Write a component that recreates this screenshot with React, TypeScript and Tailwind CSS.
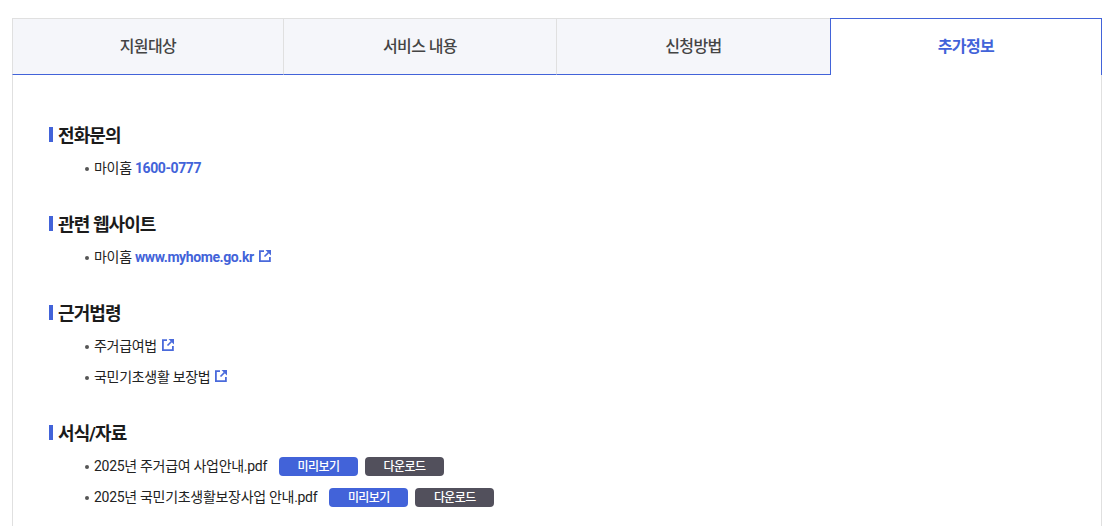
import React from 'react';

const font = { fontFamily: 'Roboto, "Noto Sans CJK KR", sans-serif' };

function LinkIcon() {
  return (
    <svg width="12" height="12" viewBox="0 0 12 12" fill="none" className="shrink-0 text-[#4a6adb]">
      <path d="M5 1.1H0.9V11.1H10.9V7" stroke="currentColor" strokeWidth="1.8" />
      <path d="M6.5 0H12V5.5Z" fill="currentColor" />
      <path d="M9.5 2.5L5.5 6.5" stroke="currentColor" strokeWidth="1.7" />
    </svg>
  );
}

function Title({ children }: { children: React.ReactNode }) {
  return (
    <h3 className="flex items-center gap-[5px] h-[26px] mb-[5px] text-[18px] font-bold tracking-[-0.9px] text-[#1b1b1b]">
      <span className="w-[4px] h-[15px] mb-[1px] bg-[#4263d9]" />
      {children}
    </h3>
  );
}

function Item({ children }: { children: React.ReactNode }) {
  return (
    <li className="flex items-center h-[31px] pl-[36px] text-[14px] tracking-[-0.3px] text-[#222]">
      <span className="w-[4px] h-[4px] rounded-full bg-[#555] mr-[5px]" />
      {children}
    </li>
  );
}

function FileBtns() {
  return (
    <span className="flex gap-[7px] ml-[12px]">
      <span className="flex items-center justify-center w-[79px] h-[19px] rounded-[4px] bg-[#4263d9] text-white text-[12px] font-medium tracking-[-0.6px]">미리보기</span>
      <span className="flex items-center justify-center w-[79px] h-[19px] rounded-[4px] bg-[#52505c] text-white text-[12px] font-medium tracking-[-0.6px]">다운로드</span>
    </span>
  );
}

const tabClass = 'flex-none flex items-center justify-center bg-[#f5f6fa] border-t border-b border-[#e0e0e0] border-b-[#4263d9] text-[16px] font-medium tracking-[-0.6px] text-[#444]';

export default function App() {
  return (
    <div className="bg-white h-[526px] overflow-hidden pl-[12px] pr-[11px] pt-[18px] w-[1113px]" style={font}>
      <div className="flex h-[57px]">
        <div className={`${tabClass} border-x w-[272px]`}>지원대상</div>
        <div className={`${tabClass} border-r w-[273px]`}>서비스 내용</div>
        <div className={`${tabClass} w-[273px]`}>신청방법</div>
        <div className="flex-1 flex items-center justify-center bg-white border border-b-0 border-[#4263d9] text-[16px] font-bold tracking-[-0.6px] text-[#4263d9]">추가정보</div>
      </div>
      <div className="border-x border-[#e0e0e0] h-[460px] pl-[36px] pt-[47px]">
        <Title>전화문의</Title>
        <ul className="mb-[27px]">
          <Item>마이홈&nbsp;<b className="tracking-[-0.4px] text-[#4263d9] font-bold">1600-0777</b></Item>
        </ul>
        <Title>관련 웹사이트</Title>
        <ul className="mb-[27px]">
          <Item>마이홈&nbsp;<b className="tracking-[-0.4px] text-[#4263d9] font-bold">www.myhome.go.kr</b><span className="ml-[5px] mb-[3px]"><LinkIcon /></span></Item>
        </ul>
        <Title>근거법령</Title>
        <ul className="mb-[27px]">
          <Item>주거급여법<span className="ml-[5px] mb-[4px]"><LinkIcon /></span></Item>
          <Item>국민기초생활 보장법<span className="ml-[5px] mb-[4px]"><LinkIcon /></span></Item>
        </ul>
        <Title>서식/자료</Title>
        <ul>
          <Item>2025년 주거급여 사업안내.pdf<FileBtns /></Item>
          <Item>2025년 국민기초생활보장사업 안내.pdf<FileBtns /></Item>
        </ul>
      </div>
    </div>
  );
}
